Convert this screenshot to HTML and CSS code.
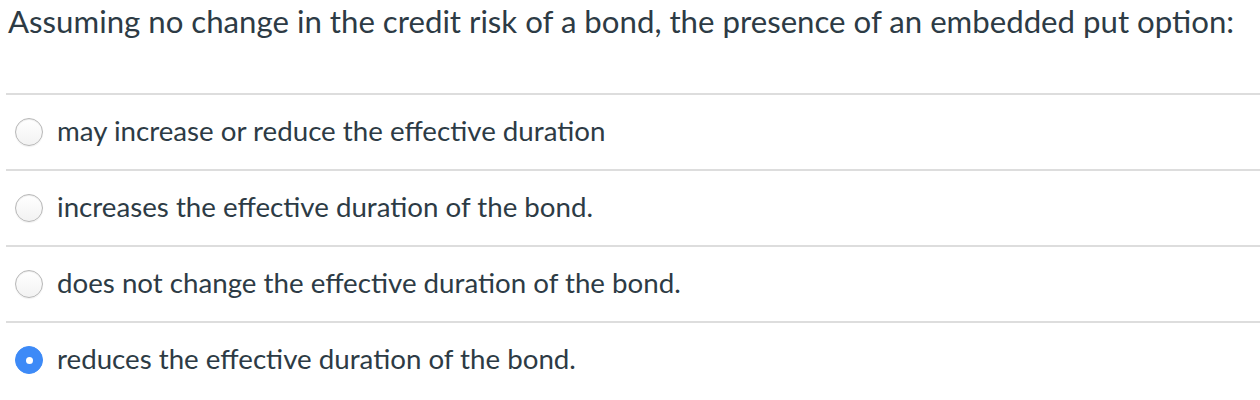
FILE: index.html
```html
<!DOCTYPE html>
<html>
<head>
<meta charset="utf-8">
<link rel="stylesheet" href="styles.css">
</head>
<body>
<div class="question">
  <div class="prompt">Assuming no change in the credit risk of a bond, the presence of an embedded put option:</div>
  <div class="answers">
    <div class="answer"><span class="radio"></span><span class="label">may increase or reduce the effective duration</span></div>
    <div class="answer"><span class="radio"></span><span class="label">increases the effective duration of the bond.</span></div>
    <div class="answer"><span class="radio"></span><span class="label">does not change the effective duration of the bond.</span></div>
    <div class="answer"><span class="radio checked"></span><span class="label">reduces the effective duration of the bond.</span></div>
  </div>
</div>
</body>
</html>
```
FILE: styles.css
```css
html, body {
  margin: 0;
  padding: 0;
  background: #fff;
}
body {
  font-family: Lato, "Open Sans", sans-serif;
  color: #2d3b45;
}
.question {
  padding: 0 0 0 6px;
}
.prompt {
  font-size: 31.2px;
  line-height: 38px;
  padding: 2px 0 0 2px;
  height: 93px;
  box-sizing: border-box;
}
.answers {
  display: flex;
  flex-direction: column;
}
.answer {
  display: flex;
  align-items: center;
  height: 74px;
  border-top: 2px solid #dddddd;
  box-sizing: content-box;
}
.radio {
  width: 26px;
  height: 26px;
  border-radius: 50%;
  border: 1px solid #b8b8b8;
  background: linear-gradient(#ffffff, #f2f2f2);
  box-shadow: inset 0 1px 1px rgba(0,0,0,0.08), 0 1px 1px rgba(0,0,0,0.06);
  margin-left: 9px;
  margin-right: 14px;
  flex: none;
  display: flex;
  align-items: center;
  justify-content: center;
}
.radio.checked {
  background: #3d8af7;
  border-color: #3d8af7;
  box-shadow: none;
}
.radio.checked::after {
  content: "";
  width: 7px;
  height: 7px;
  border-radius: 50%;
  background: #fff;
}
.label {
  font-size: 27.7px;
  line-height: 32px;
  margin-top: -2px;
}
```
